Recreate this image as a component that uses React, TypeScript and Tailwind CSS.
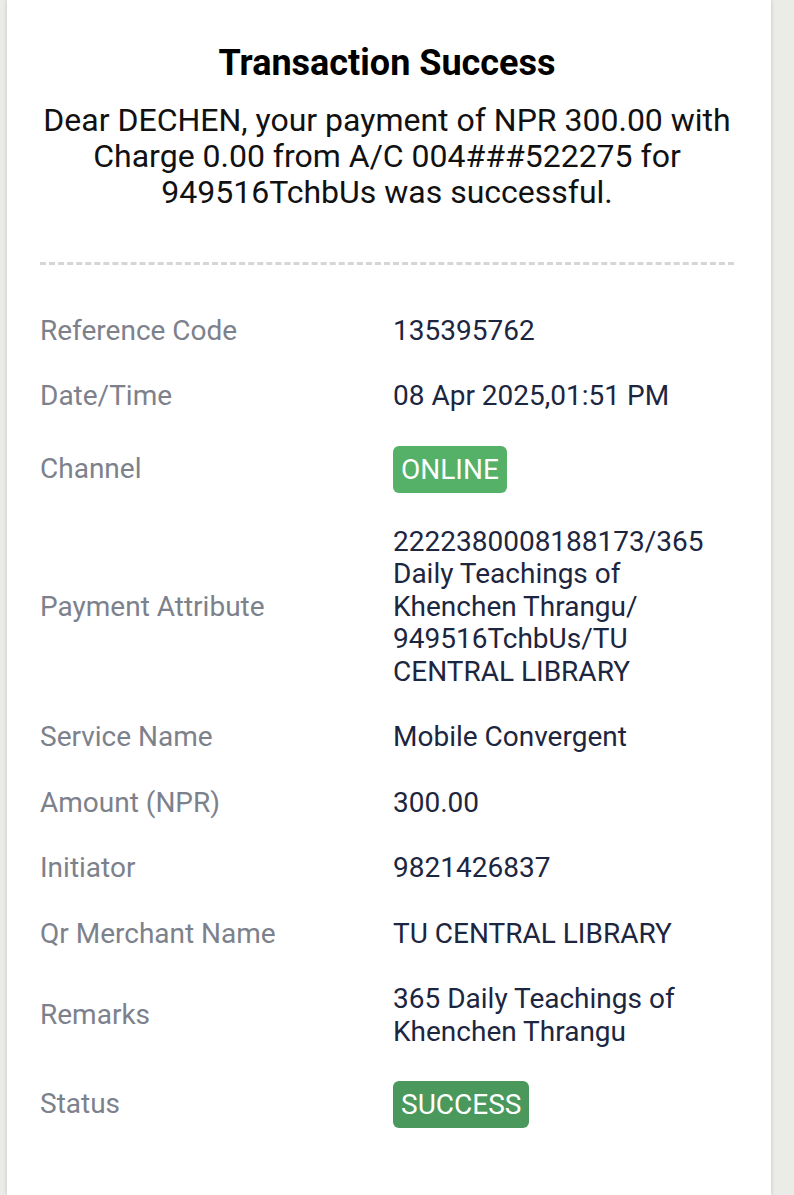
import React from "react";

type Row = {
  label: string;
  value?: React.ReactNode;
  badge?: "online" | "success";
};

const rows: Row[] = [
  { label: "Reference Code", value: "135395762" },
  { label: "Date/Time", value: "08 Apr 2025,01:51 PM" },
  { label: "Channel", value: "ONLINE", badge: "online" },
  {
    label: "Payment Attribute",
    value: (
      <>
        2222380008188173/365
        <br />
        Daily Teachings of
        <br />
        Khenchen Thrangu/
        <br />
        949516TchbUs/TU
        <br />
        CENTRAL LIBRARY
      </>
    ),
  },
  { label: "Service Name", value: "Mobile Convergent" },
  { label: "Amount (NPR)", value: "300.00" },
  { label: "Initiator", value: "9821426837" },
  { label: "Qr Merchant Name", value: "TU CENTRAL LIBRARY" },
  { label: "Remarks", value: "365 Daily Teachings of Khenchen Thrangu" },
  { label: "Status", value: "SUCCESS", badge: "success" },
];

const App: React.FC = () => {
  return (
    <div className="min-h-[1195px] bg-[#ebebe7] font-['Roboto',sans-serif]">
      <div className="ml-[7px] mr-[23px] min-h-[1195px] bg-white shadow-[0_0_4px_rgba(0,0,0,0.18)] pl-[33px] pr-[37px]">
        {/* Heading */}
        <div className="pt-[43px] text-center">
          <h1 className="text-[36px] font-bold leading-[40px] text-black">
            Transaction Success
          </h1>
          <p className="mt-[19px] text-[32px] leading-[36px] text-[#111]">
            Dear DECHEN, your payment of NPR 300.00 with
            <br />
            Charge 0.00 from A/C 004###522275 for
            <br />
            949516TchbUs was successful.
          </p>
        </div>

        {/* Divider */}
        <div className="mt-[52px] border-t-[3px] border-dashed border-[#d6d6d6]" />

        {/* Details */}
        <div className="mt-[33px] flex flex-col">
          {rows.map((row) => (
            <div
              key={row.label}
              className="grid grid-cols-[353px_1fr] items-center py-[16.5px] text-[28px] leading-[32.5px]"
            >
              <span className="text-[#7d818b]">{row.label}</span>
              {row.badge ? (
                <span
                  className={
                    row.badge === "online"
                      ? "justify-self-start rounded-[6px] bg-[#55b068] px-[8px] py-[7px] text-white leading-[33px]"
                      : "justify-self-start rounded-[6px] bg-[#4a985c] px-[8px] py-[7px] text-white leading-[33px]"
                  }
                >
                  {row.value}
                </span>
              ) : (
                <span className="text-[#1d2640]">{row.value}</span>
              )}
            </div>
          ))}
        </div>
      </div>
    </div>
  );
};

export default App;
